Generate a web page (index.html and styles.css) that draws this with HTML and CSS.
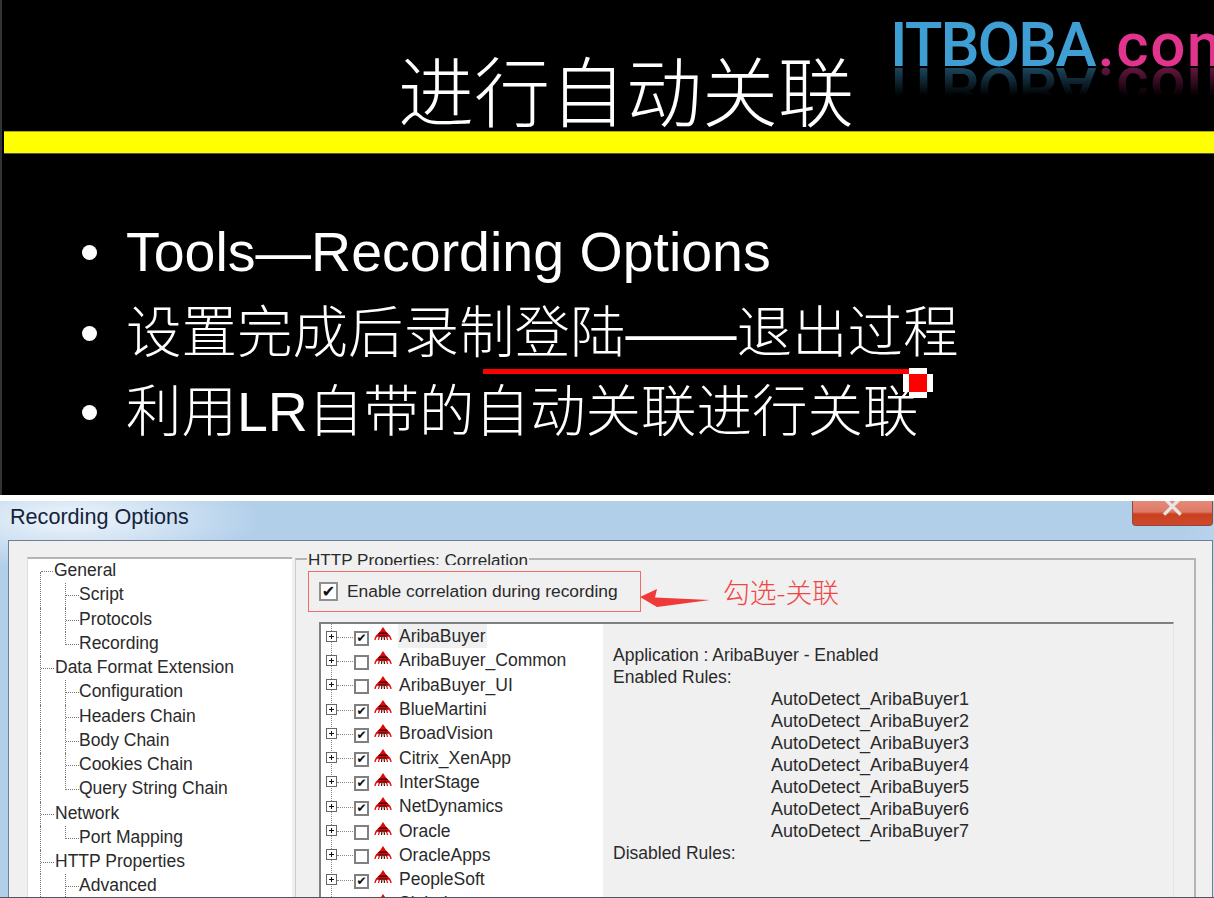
FILE: index.html
```html
<!DOCTYPE html>
<html lang="zh-CN">
<head>
<meta charset="UTF-8">
<meta name="viewport" content="width=device-width, initial-scale=1.0">
<title>进行自动关联</title>
<link rel="stylesheet" href="styles.css">
</head>
<body>
<svg class="sprites" width="0" height="0" aria-hidden="true">
    <symbol id="ant" viewBox="0 0 18 14">
        <path d="M1 13C1 10.500 2 9.500 4 8.500M4.500 13C4.500 11 5 10 6.500 9M17 13C17 10.500 16 9.500 14 8.500M13.500 13C13.500 11 13 10 11.500 9" stroke="#e01010" stroke-width="1.3" fill="none"/>
        <path d="M7.500 13 8 9M10.500 13 10 9" stroke="#411" stroke-width="1.2" fill="none"/>
        <path d="M9 0 12 4.500 17 9.500H1L6 4.500z" fill="#e00808"/>
        <path d="M5.500 5.500h7l1.500 1.500H4z" fill="#400"/>
        <path d="M4 8.500h10v1H4z" fill="#400"/>
    </symbol>
</svg>

<section class="slide">
    <header class="slide-head">
        <h1>进行自动关联</h1>
        <div class="logo">ITBOBA<b>.com</b></div>
    </header>
    <div class="slide-bar"></div>
    <ul class="bullets">
        <li>Tools—Recording Options</li>
        <li class="cjk">设置完成后录制登陆——退出过程</li>
        <li class="cjk">利用LR自带的自动关联进行关联</li>
    </ul>
    <div class="pen-line"></div>
    <div class="pen-tip"></div>
</section>

<section class="dialog">
    <div class="titlebar">
        <span class="titlebar-text">Recording Options</span>
        <div class="close-btn"><span>✕</span></div>
    </div>
    <div class="dialog-body">
        <ul class="nav">
            <li class="nav-row"><span class="stem first"></span>General</li>
            <li class="nav-row"><span class="rail"></span><span class="stem"></span>Script</li>
            <li class="nav-row"><span class="rail"></span><span class="stem"></span>Protocols</li>
            <li class="nav-row"><span class="rail"></span><span class="stem last"></span>Recording</li>
            <li class="nav-row"><span class="stem"></span>Data Format Extension</li>
            <li class="nav-row"><span class="rail"></span><span class="stem"></span>Configuration</li>
            <li class="nav-row"><span class="rail"></span><span class="stem"></span>Headers Chain</li>
            <li class="nav-row"><span class="rail"></span><span class="stem"></span>Body Chain</li>
            <li class="nav-row"><span class="rail"></span><span class="stem"></span>Cookies Chain</li>
            <li class="nav-row"><span class="rail"></span><span class="stem last"></span>Query String Chain</li>
            <li class="nav-row"><span class="stem"></span>Network</li>
            <li class="nav-row"><span class="rail"></span><span class="stem last"></span>Port Mapping</li>
            <li class="nav-row"><span class="stem"></span>HTTP Properties</li>
            <li class="nav-row"><span class="rail"></span><span class="stem"></span>Advanced</li>
        </ul>

        <div class="group">
            <div class="group-title">HTTP Properties: Correlation</div>
            <div class="enable-line">
                <label class="enable-box">
                    <span class="check big on"></span>
                    Enable correlation during recording
                </label>
                <svg class="arrow" width="70" height="18" viewBox="0 0 70 18" aria-hidden="true">
                    <path d="M0 8 17 0 15 8.500 70 11 17 18z" fill="#f03a3a"/>
                </svg>
                <span class="note">勾选-关联</span>
            </div>
            <div class="panes">
                <ul class="apps">
                    <li class="app"><span class="plus"></span><span class="check on"></span><svg class="ant"><use href="#ant"/></svg><span class="app-name current">AribaBuyer</span></li>
                    <li class="app"><span class="plus"></span><span class="check"></span><svg class="ant"><use href="#ant"/></svg><span class="app-name">AribaBuyer_Common</span></li>
                    <li class="app"><span class="plus"></span><span class="check"></span><svg class="ant"><use href="#ant"/></svg><span class="app-name">AribaBuyer_UI</span></li>
                    <li class="app"><span class="plus"></span><span class="check on"></span><svg class="ant"><use href="#ant"/></svg><span class="app-name">BlueMartini</span></li>
                    <li class="app"><span class="plus"></span><span class="check on"></span><svg class="ant"><use href="#ant"/></svg><span class="app-name">BroadVision</span></li>
                    <li class="app"><span class="plus"></span><span class="check on"></span><svg class="ant"><use href="#ant"/></svg><span class="app-name">Citrix_XenApp</span></li>
                    <li class="app"><span class="plus"></span><span class="check on"></span><svg class="ant"><use href="#ant"/></svg><span class="app-name">InterStage</span></li>
                    <li class="app"><span class="plus"></span><span class="check on"></span><svg class="ant"><use href="#ant"/></svg><span class="app-name">NetDynamics</span></li>
                    <li class="app"><span class="plus"></span><span class="check"></span><svg class="ant"><use href="#ant"/></svg><span class="app-name">Oracle</span></li>
                    <li class="app"><span class="plus"></span><span class="check"></span><svg class="ant"><use href="#ant"/></svg><span class="app-name">OracleApps</span></li>
                    <li class="app"><span class="plus"></span><span class="check on"></span><svg class="ant"><use href="#ant"/></svg><span class="app-name">PeopleSoft</span></li>
                    <li class="app"><span class="plus"></span><span class="check on"></span><svg class="ant"><use href="#ant"/></svg><span class="app-name">Siebel</span></li>
                </ul>
                <div class="details">
                    <p>Application : AribaBuyer - Enabled</p>
                    <p>Enabled Rules:</p>
                    <p class="rule">AutoDetect_AribaBuyer1</p>
                    <p class="rule">AutoDetect_AribaBuyer2</p>
                    <p class="rule">AutoDetect_AribaBuyer3</p>
                    <p class="rule">AutoDetect_AribaBuyer4</p>
                    <p class="rule">AutoDetect_AribaBuyer5</p>
                    <p class="rule">AutoDetect_AribaBuyer6</p>
                    <p class="rule">AutoDetect_AribaBuyer7</p>
                    <p>Disabled Rules:</p>
                </div>
            </div>
        </div>
    </div>
</section>
</body>
</html>
```

FILE: styles.css
```css
html, body {
    height: 100%;
}
body {
    margin: 0;
    height: 898px;
    overflow: hidden;
    background: #fff;
    font-family: "Liberation Sans", "Noto Sans CJK SC", sans-serif;
}
ul {
    margin: 0;
    padding: 0;
    list-style: none;
}
p {
    margin: 0;
}
.sprites {
    display: block;
}

/* slide on top */
.slide {
    position: relative;
    height: 495px;
    box-sizing: border-box;
    background: #000;
    border-left: 2px solid #333;
    padding-left: 2px;
    overflow: hidden;
    color: #fff;
}
.slide-head {
    height: 132px;
    display: flex;
    justify-content: center;
    position: relative;
}
h1 {
    margin: 0;
    padding-top: 35px;
    padding-left: 34px;
    font-family: "Noto Sans CJK SC", sans-serif;
    font-size: 76px;
    line-height: 106px;
    font-weight: 300;
    height: 97px;
}
.logo {
    position: absolute;
    left: 886px;
    top: 11px;
    white-space: nowrap;
    font-family: "Roboto", sans-serif;
    font-size: 62px;
    line-height: 68px;
    font-weight: 500;
    letter-spacing: -2px;
    color: #3f9fd4;
    -webkit-box-reflect: below -24px linear-gradient(transparent 40%, rgba(255,255,255,0.45) 82%);
}
.logo b {
    font-weight: 500;
    letter-spacing: 1.500px;
    margin-left: 3px;
    color: #e2348f;
}
.slide-bar {
    height: 21px;
    background: #ff0;
    box-shadow: 0 1px 0 #555, 0 -1px 0 #aa0;
}
.bullets {
    padding: 60px 0 0 78px;
    font-size: 55.500px;
    line-height: 79px;
}
.bullets li {
    display: flex;
    align-items: center;
    height: 79px;
    box-sizing: border-box;
    font-weight: 300;
    white-space: nowrap;
}
.bullets li.cjk {
    padding-top: 4px;
}
.bullets li::before {
    content: "";
    width: 15px;
    height: 15px;
    border-radius: 50%;
    background: #fff;
    margin-right: 29px;
    flex: none;
}
.pen-line {
    position: absolute;
    left: 481px;
    top: 369px;
    width: 426px;
    height: 5px;
    background: #f00;
}
.pen-tip {
    position: absolute;
    left: 907px;
    top: 374px;
    width: 18px;
    height: 18px;
    background: #f00;
    box-shadow: 6px 0 #fff, -6px 0 #fff, 0 6px #fff, 0 -6px #fff;
}

/* dialog below */
.dialog {
    margin-top: 6px;
    height: 397px;
    box-sizing: border-box;
    background:
        radial-gradient(ellipse 190px 50px at 70px 18px, #e3eef8 20%, rgba(227,238,248,0) 100%),
        linear-gradient(110deg, #b2cfea 88%, #d3e3f3 100%);
    padding-left: 1px;
    overflow: hidden;
    border-bottom: 1px solid #555;
}
.titlebar {
    height: 39px;
    display: flex;
    justify-content: space-between;
    padding-left: 9px;
}
.titlebar-text {
    font-size: 21.600px;
    line-height: 32px;
    color: #14233a;
}
.close-btn {
    width: 79px;
    height: 24px;
    margin-right: 1px;
    border: 1px solid #8a4a40;
    border-top: 0;
    border-radius: 0 0 4px 4px;
    background: linear-gradient(#e58a78 0, #de7a68 45%, #c8401f 55%, #cf4a2c 100%);
    text-align: center;
    overflow: hidden;
    color: #e6e6e6;
    font-family: "DejaVu Sans", sans-serif;
    font-size: 32px;
    line-height: 12px;
    font-weight: bold;
}
.dialog-body {
    margin-left: 7px;
    margin-right: 1px;
    height: 360px;
    box-sizing: border-box;
    background: #f0f0f0;
    border: 1px solid #6f7f8f;
    padding: 16px 16px 0 18px;
    display: flex;
    color: #2a2a2a;
    font-size: 17.500px;
}

/* left tree */
.nav {
    width: 265px;
    flex: none;
    height: 400px;
    box-sizing: border-box;
    background: #fff;
    border-top: 2px solid #b5b5b5;
    border-left: 1px solid #ddd;
    padding: 0 0 0 12px;
}
.nav-row {
    height: 24.250px;
    display: flex;
    line-height: 22px;
    white-space: nowrap;
}
.stem {
    width: 13px;
    margin-right: 1px;
    border-left: 1px dotted #777;
    flex: none;
}
.rail + .stem {
    margin-right: 0;
}
.stem::before {
    content: "";
    display: block;
    height: 50%;
    border-bottom: 1px dotted #777;
}
.stem.first {
    border-left: 0;
    padding-left: 1px;
    width: 12px;
}
.stem.first::after {
    content: "";
    display: block;
    height: 50%;
    border-left: 1px dotted #777;
    margin-left: -1px;
}
.stem.last {
    border-left: 0;
    width: 14px;
}
.stem.last::before {
    border-left: 1px dotted #777;
}
.rail {
    width: 24px;
    flex: none;
    border-left: 1px dotted #777;
}

/* right group */
.group {
    flex: none;
    width: 901px;
    margin-left: 3px;
    margin-top: 1px;
    box-sizing: border-box;
    border-top: 2px solid #b5b5b5;
    border-right: 2px solid #b5b5b5;
    border-left: 1px solid #ccc;
    height: 400px;
}
.group-title {
    width: max-content;
    margin: -9px 0 0 11px;
    height: 14px;
    overflow: hidden;
    background: #f0f0f0;
    padding: 0 1px;
    font-size: 17.100px;
    line-height: 20px;
    white-space: nowrap;
}
.enable-line {
    display: flex;
    align-items: center;
    margin: 6px 0 0 12px;
    height: 41px;
}
.enable-box {
    width: 333px;
    height: 41px;
    box-sizing: border-box;
    border: 1px solid #f46a6a;
    display: flex;
    align-items: center;
    gap: 9px;
    padding-left: 10px;
    font-size: 17.400px;
    white-space: nowrap;
    flex: none;
}
.arrow {
    flex: none;
    margin: 12px 0 0 -1px;
}
.note {
    margin-left: 13px;
    font-family: "Noto Sans CJK SC", sans-serif;
    font-size: 26.800px;
    font-weight: 300;
    color: #f04545;
    white-space: nowrap;
}
.panes {
    display: flex;
    margin: 10px 0 0 23px;
}
.apps {
    width: 284px;
    height: 290px;
    box-sizing: border-box;
    flex: none;
    border-top: 2px solid #808080;
    border-left: 2px solid #808080;
    background: #fff linear-gradient(#888 50%, transparent 50%) 10px 0 / 1px 2px repeat-y;
    padding: 0 0 0 5px;
}
.app {
    height: 24.300px;
    display: flex;
    align-items: center;
}
.plus {
    width: 9px;
    height: 9px;
    border: 1px solid #666;
    background: #fff linear-gradient(#111, #111) center / 5px 1px no-repeat;
    flex: none;
}
.plus::before {
    content: "";
    display: block;
    width: 1px;
    height: 5px;
    margin: 2px 0 0 4px;
    background: #111;
}
.plus::after {
    content: "";
    display: block;
    width: 16px;
    margin: -2px 0 0 10px;
    border-top: 1px dotted #888;
}
.check {
    width: 11px;
    height: 11px;
    border: 2px solid #808080;
    background: #fff;
    flex: none;
    margin: 4px 5px 0 17px;
    display: flex;
    align-items: center;
    justify-content: center;
}
.check.on::before {
    content: "✔";
    font-family: "DejaVu Sans", sans-serif;
    font-size: 12px;
    line-height: 11px;
    color: #111;
}
.check.big {
    width: 15px;
    height: 15px;
    margin: 0;
    border-color: #909090;
}
.check.big.on::before {
    font-size: 16px;
}
.ant {
    width: 18px;
    height: 14px;
    flex: none;
    margin-top: -4px;
}
.app-name {
    margin-left: 6px;
    padding: 0 1px;
    line-height: 24px;
    white-space: nowrap;
}
.app-name.current {
    background: #f0f0f0;
}
.details {
    width: 571px;
    box-sizing: border-box;
    flex: none;
    border-top: 2px solid #808080;
    border-right: 1px solid #e4e4e4;
    padding: 20px 0 0 10px;
    line-height: 22px;
    height: 290px;
}
.rule {
    padding-left: 158px;
    font-size: 18px;
}
```
